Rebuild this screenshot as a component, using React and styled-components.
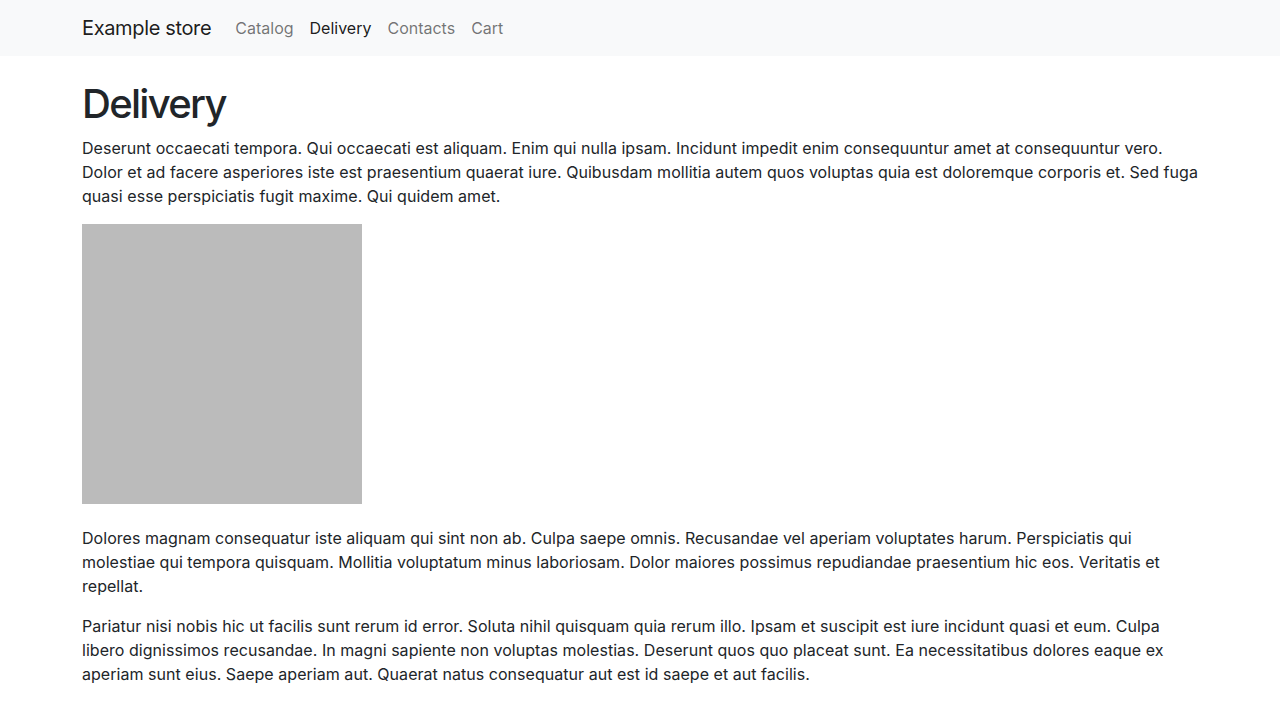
import React from "react";
import styled, { createGlobalStyle } from "styled-components";

const Global = createGlobalStyle`
  *, *::before, *::after { box-sizing: border-box; }
  body {
    margin: 0;
    font-family: Inter, "Noto Sans", "Liberation Sans", sans-serif;
    font-size: 16px;
    line-height: 1.5;
    color: #212529;
    background: #fff;
    -webkit-font-smoothing: antialiased;
  }
`;

const Navbar = styled.nav`
  background: #f8f9fa;
  padding: 8px 0;
`;

const Container = styled.div`
  max-width: 1140px;
  margin: 0 auto;
  padding: 0 12px;
  display: ${(p) => (p.$flex ? "flex" : "block")};
  align-items: center;
`;

const Brand = styled.a`
  font-size: 20px;
  line-height: 30px;
  padding: 5px 0;
  margin-right: 16px;
  color: rgba(0, 0, 0, 0.9);
  text-decoration: none;
  letter-spacing: -0.35px;
`;

const NavList = styled.ul`
  display: flex;
  list-style: none;
  margin: 0;
  padding: 0;
`;

const NavLink = styled.a`
  display: block;
  padding: 8px;
  color: ${(p) => (p.$active ? "rgba(0,0,0,0.9)" : "rgba(0,0,0,0.55)")};
  text-decoration: none;
  letter-spacing: 0;
`;

const Main = styled.main`
  padding-top: 24px;
`;

const Title = styled.h1`
  font-size: 40px;
  font-weight: 500;
  line-height: 1.2;
  margin: 0 0 8px;
  letter-spacing: -1.7px;
`;

const Text = styled.p`
  margin: 0 0 16px;
  letter-spacing: 0.04px;
`;

const Picture = styled.div`
  width: 280px;
  height: 280px;
  background: #bbbbbb;
  margin-bottom: 22px;
`;

export default function App() {
  const links = ["Catalog", "Delivery", "Contacts", "Cart"];
  return (
    <>
      <Global />
      <Navbar>
        <Container $flex>
          <Brand href="#">Example store</Brand>
          <NavList>
            {links.map((l) => (
              <li key={l}>
                <NavLink href="#" $active={l === "Delivery"}>
                  {l}
                </NavLink>
              </li>
            ))}
          </NavList>
        </Container>
      </Navbar>
      <Main>
        <Container>
          <Title>Delivery</Title>
          <Text>
            Deserunt occaecati tempora. Qui occaecati est aliquam. Enim qui nulla ipsam. Incidunt impedit enim
            consequuntur amet at consequuntur vero. Dolor et ad facere asperiores iste est praesentium quaerat iure.
            Quibusdam mollitia autem quos voluptas quia est doloremque corporis et. Sed fuga quasi esse perspiciatis
            fugit maxime. Qui quidem amet.
          </Text>
          <Picture />
          <Text>
            Dolores magnam consequatur iste aliquam qui sint non ab. Culpa saepe omnis. Recusandae vel aperiam
            voluptates harum. Perspiciatis qui molestiae qui tempora quisquam. Mollitia voluptatum minus laboriosam.
            Dolor maiores possimus repudiandae praesentium hic eos. Veritatis et repellat.
          </Text>
          <Text>
            Pariatur nisi nobis hic ut facilis sunt rerum id error. Soluta nihil quisquam quia rerum illo. Ipsam et
            suscipit est iure incidunt quasi et eum. Culpa libero dignissimos recusandae. In magni sapiente non
            voluptas molestias. Deserunt quos quo placeat sunt. Ea necessitatibus dolores eaque ex aperiam sunt eius.
            Saepe aperiam aut. Quaerat natus consequatur aut est id saepe et aut facilis.
          </Text>
        </Container>
      </Main>
    </>
  );
}
